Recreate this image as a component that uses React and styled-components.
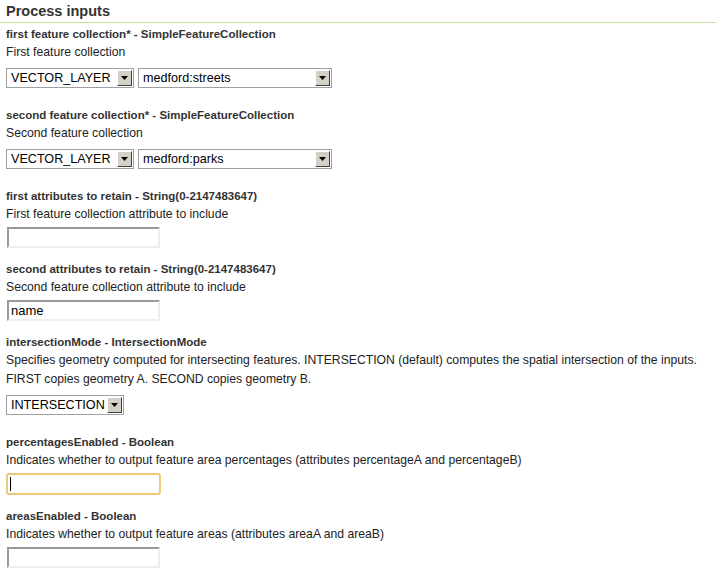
import React from "react";
import styled, { createGlobalStyle } from "styled-components";

const GlobalStyle = createGlobalStyle`
  html, body {
    margin: 0;
    padding: 0;
    background: #fff;
  }
  body {
    font-family: "Liberation Sans", Arial, sans-serif;
    color: #222;
  }
`;

const fields = [
  {
    name: "first feature collection*",
    type: "SimpleFeatureCollection",
    desc: ["First feature collection"],
    control: "layer",
    value: "medford:streets",
  },
  {
    name: "second feature collection*",
    type: "SimpleFeatureCollection",
    desc: ["Second feature collection"],
    control: "layer",
    value: "medford:parks",
  },
  {
    name: "first attributes to retain",
    type: "String(0-2147483647)",
    desc: ["First feature collection attribute to include"],
    control: "text",
    value: "",
  },
  {
    name: "second attributes to retain",
    type: "String(0-2147483647)",
    desc: ["Second feature collection attribute to include"],
    control: "text",
    value: "name",
  },
  {
    name: "intersectionMode",
    type: "IntersectionMode",
    desc: [
      "Specifies geometry computed for intersecting features. INTERSECTION (default) computes the spatial intersection of the inputs.",
      "FIRST copies geometry A. SECOND copies geometry B.",
    ],
    control: "enum",
    value: "INTERSECTION",
  },
  {
    name: "percentagesEnabled",
    type: "Boolean",
    desc: [
      "Indicates whether to output feature area percentages (attributes percentageA and percentageB)",
    ],
    control: "text",
    value: "",
    focused: true,
  },
  {
    name: "areasEnabled",
    type: "Boolean",
    desc: ["Indicates whether to output feature areas (attributes areaA and areaB)"],
    control: "text",
    value: "",
  },
];

function Select({ width, value }) {
  return (
    <SelectBox $width={width}>
      <SelectText>{value}</SelectText>
      <Arrow>
        <svg width="7" height="4" viewBox="0 0 7 4">
          <polygon points="0,0 7,0 3.5,4" fill="#000" />
        </svg>
      </Arrow>
    </SelectBox>
  );
}

function Control({ field }) {
  if (field.control === "layer") {
    return (
      <SelectRow>
        <Select width={128} value="VECTOR_LAYER" />
        <Select width={194} value={field.value} />
      </SelectRow>
    );
  }
  if (field.control === "enum") {
    return (
      <SelectRow>
        <Select width={118} value={field.value} />
      </SelectRow>
    );
  }
  if (field.focused) {
    return (
      <FocusWrap>
        <FocusedInput defaultValue={field.value} readOnly />
        <Caret />
      </FocusWrap>
    );
  }
  return <TextInput defaultValue={field.value} readOnly />;
}

function App() {
  return (
    <>
      <GlobalStyle />
      <Page>
        <Header>Process inputs</Header>
        {fields.map((f) => (
          <Field key={f.name} $select={f.control !== "text"}>
            <Label>
              {f.name} - {f.type}
            </Label>
            {f.desc.map((line) => (
              <Desc key={line}>{line}</Desc>
            ))}
            <Control field={f} />
          </Field>
        ))}
      </Page>
    </>
  );
}

const Page = styled.div`
  width: 716px;
`;

const Header = styled.h2`
  margin: 0;
  padding: 2px 6px 2px;
  font-size: 14.5px;
  line-height: 18px;
  font-weight: bold;
  color: #333;
  border-bottom: 1px solid #c3e09a;
`;

const Field = styled.div`
  padding: 0 6px;
  margin-top: 2px;
  margin-bottom: ${(p) => (p.$select ? "18px" : "12px")};
`;

const Label = styled.div`
  font-size: 11.5px;
  line-height: 18px;
  font-weight: bold;
  color: #333;
`;

const Desc = styled.div`
  font-size: 12.2px;
  line-height: 19px;
  color: #222;
`;

const SelectRow = styled.div`
  display: flex;
  gap: 4px;
  margin-top: 6px;
  margin-bottom: 1px;
`;

const SelectBox = styled.div`
  box-sizing: border-box;
  width: ${(p) => p.$width}px;
  height: 20px;
  display: flex;
  align-items: center;
  border: 1px solid #a0a0a0;
  padding: 1px;
  background: #fff;
`;

const SelectText = styled.span`
  flex: 1;
  padding-left: 3px;
  font-size: 12.6px;
  color: #000;
  white-space: nowrap;
  overflow: hidden;
`;

const Arrow = styled.span`
  box-sizing: border-box;
  width: 15px;
  height: 16px;
  display: flex;
  align-items: center;
  justify-content: center;
  background: #d4d0c8;
  border-top: 1px solid #fff;
  border-left: 1px solid #fff;
  border-right: 1px solid #404040;
  border-bottom: 1px solid #404040;
`;

const TextInput = styled.input`
  display: block;
  box-sizing: border-box;
  width: 153px;
  height: 21px;
  margin: 3px 0 0 1px;
  padding: 0 2px;
  font-family: "Liberation Sans", Arial, sans-serif;
  font-size: 13px;
  color: #000;
  background: #fff;
  border-style: solid;
  border-width: 2px;
  border-color: #999 #eee #eee #999;
  outline: none;
`;

const FocusWrap = styled.div`
  position: relative;
  width: 155px;
  margin-top: 3px;
`;

const FocusedInput = styled(TextInput)`
  width: 155px;
  height: 22px;
  margin: 0;
  border: 2px solid #f0c878;
  border-radius: 3px;
`;

const Caret = styled.span`
  position: absolute;
  left: 4px;
  top: 4px;
  width: 1px;
  height: 14px;
  background: #000;
`;

export default App;
